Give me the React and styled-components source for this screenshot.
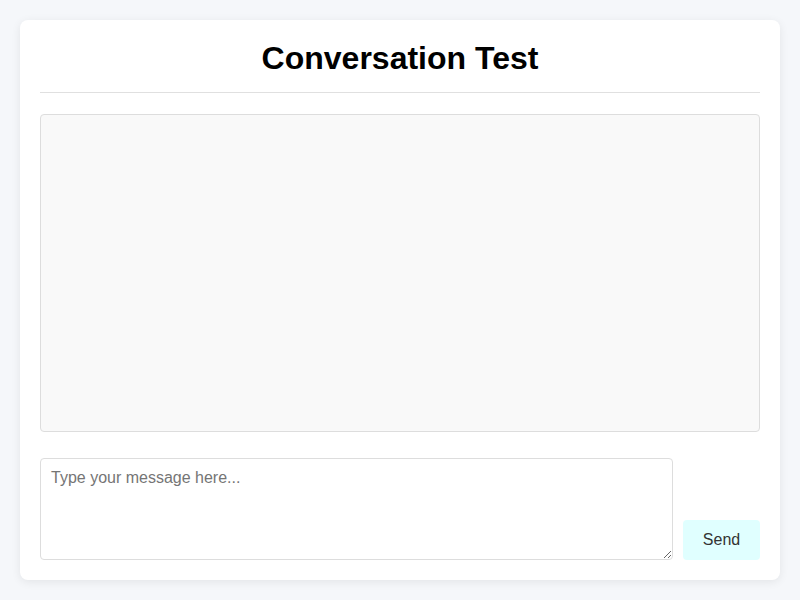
import React from 'react'
import styled, { createGlobalStyle } from 'styled-components'

const GlobalStyle = createGlobalStyle`
  html, body {
    margin: 0;
    padding: 0;
    background: #f5f7fa;
    font-family: "Liberation Sans", Arial, sans-serif;
  }
`

const Page = styled.div`
  padding: 20px;
  height: 600px;
  box-sizing: border-box;
`

const Card = styled.div`
  height: 100%;
  box-sizing: border-box;
  background: #fff;
  border-radius: 8px;
  box-shadow: 0 2px 10px rgba(0, 0, 0, 0.08);
  padding: 20px;
  display: flex;
  flex-direction: column;
`

const Header = styled.div`
  border-bottom: 1px solid #e0e0e0;
  padding-bottom: 15px;
  margin-bottom: 21px;

  h1 {
    margin: 0;
    text-align: center;
    font-size: 32px;
    line-height: 37px;
    font-weight: bold;
    color: #000;
  }
`

const Messages = styled.div`
  flex: 1;
  background: #f9f9f9;
  border: 1px solid #ddd;
  border-radius: 4px;
  overflow-y: auto;
`

const InputRow = styled.div`
  display: flex;
  align-items: flex-end;
  gap: 10px;
  margin-top: 26px;
`

const MessageInput = styled.textarea`
  flex: 1;
  height: 102px;
  box-sizing: border-box;
  padding: 10px;
  border: 1px solid #ddd;
  border-radius: 4px;
  font-family: "Liberation Sans", Arial, sans-serif;
  font-size: 16px;
  color: #333;
  resize: vertical;
  outline: none;

  &::placeholder {
    color: #757575;
  }
`

const SendButton = styled.button`
  width: 77px;
  height: 40px;
  border: none;
  border-radius: 4px;
  background: #e0ffff;
  color: #333;
  font-family: "Liberation Sans", Arial, sans-serif;
  font-size: 16px;
  cursor: pointer;
`

const App = () => {
  return (
    <>
      <GlobalStyle />
      <Page>
        <Card>
          <Header>
            <h1>Conversation Test</h1>
          </Header>
          <Messages />
          <InputRow>
            <MessageInput placeholder='Type your message here...' />
            <SendButton>Send</SendButton>
          </InputRow>
        </Card>
      </Page>
    </>
  )
}

export default App
